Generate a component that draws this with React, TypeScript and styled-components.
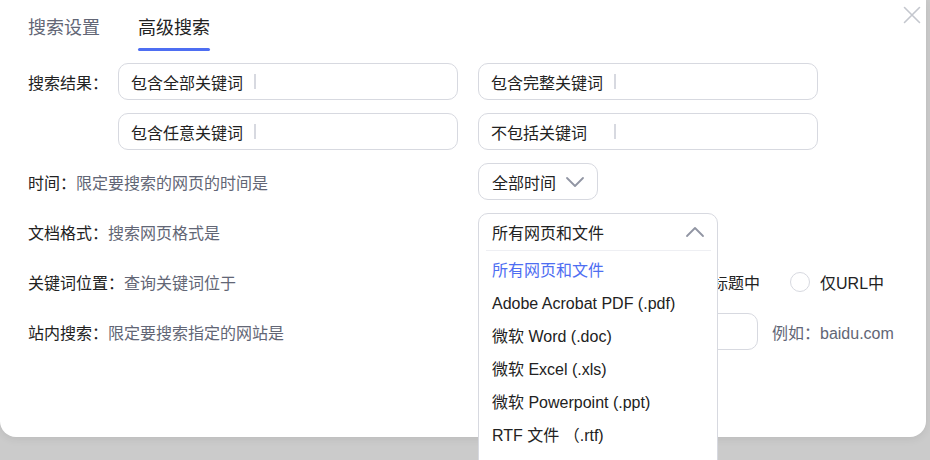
import React from 'react';
import styled, { createGlobalStyle } from 'styled-components';

const GlobalStyle = createGlobalStyle`
  html { overflow: hidden; height: 100%; background: #cbcbcb; }
  body {
    margin: 0;
    padding: 0;
    min-height: 100%;
    font-family: "Liberation Sans", Arial, "Noto Sans CJK SC", sans-serif;
    color: #222;
  }
  * { box-sizing: border-box; }
`;

const Modal = styled.div`
  position: relative;
  width: 926px;
  height: 437px;
  background: #fff;
  border-radius: 0 0 16px 16px;
  box-shadow: 0 2px 8px rgba(0, 0, 0, 0.08);
  padding-left: 28px;
`;

const CloseButton = styled.button`
  position: absolute;
  top: 5px;
  right: 4px;
  width: 20px;
  height: 20px;
  padding: 0;
  border: none;
  background: none;
  display: flex;
  align-items: center;
  justify-content: center;
`;

const Tabs = styled.div`
  display: flex;
  gap: 38px;
`;

const Tab = styled.div<{ $active?: boolean }>`
  display: flex;
  flex-direction: column;
  padding-top: 16px;
  font-size: 18px;
  line-height: 24px;
  color: ${(p) => (p.$active ? '#222' : '#626675')};
`;

const TabBar = styled.span<{ $active?: boolean }>`
  display: block;
  height: 3px;
  margin-top: 8px;
  border-radius: 2px;
  background: ${(p) => (p.$active ? '#4e6ef2' : 'transparent')};
`;

const Form = styled.div`
  display: flex;
  flex-direction: column;
  gap: 13px;
  margin-top: 12px;
  font-size: 16px;
`;

const KeywordRow = styled.div`
  display: flex;
`;

const RowLabel = styled.div`
  width: 90px;
  height: 37px;
  display: flex;
  align-items: center;
  white-space: nowrap;
`;

const InputGrid = styled.div`
  display: grid;
  grid-template-columns: 340px 340px;
  column-gap: 20px;
  row-gap: 13px;
`;

const Row = styled.div`
  display: grid;
  grid-template-columns: 450px auto;
  align-items: center;
  height: 37px;
`;

const Caption = styled.div`
  white-space: nowrap;
`;

const Desc = styled.span`
  color: #626675;
`;

const TextField = styled.div<{ $width?: number }>`
  width: ${(p) => p.$width ?? 340}px;
  height: 37px;
  border: 1px solid #d7d9e0;
  border-radius: 10px;
  display: flex;
  align-items: center;
  padding: 0 12px;
`;

const FieldLabel = styled.span`
  width: 112px;
  flex: none;
  white-space: nowrap;
`;

const Divider = styled.span`
  width: 2px;
  height: 15px;
  margin-left: 11px;
  background: #d7d9e0;
  flex: none;
`;

const Input = styled.input`
  flex: 1;
  min-width: 0;
  border: none;
  outline: none;
  background: transparent;
  font: inherit;
  padding: 0 8px;
`;

const Control = styled.div`
  position: relative;
  display: flex;
  align-items: center;
  height: 37px;
`;

const SelectBox = styled.div`
  width: 120px;
  height: 37px;
  border: 1px solid #d7d9e0;
  border-radius: 10px;
  display: flex;
  align-items: center;
  justify-content: space-between;
  padding: 0 12px 0 13px;
  white-space: nowrap;
`;

const Dropdown = styled.div`
  position: absolute;
  top: 0;
  left: 0;
  width: 240px;
  background: #fff;
  border: 1px solid #d7d9e0;
  border-radius: 10px;
  z-index: 10;
`;

const DropHeader = styled.div`
  height: 36px;
  display: flex;
  align-items: center;
  justify-content: space-between;
  padding: 0 12px 0 13px;
`;

const DropSep = styled.div`
  height: 1px;
  margin: 0 6px 0 7px;
  background: #eeeff3;
`;

const DropList = styled.ul`
  list-style: none;
  margin: 0;
  padding: 3px 0 30px;
`;

const DropItem = styled.li<{ $selected?: boolean }>`
  height: 33px;
  line-height: 33px;
  padding-left: 13px;
  white-space: nowrap;
  color: ${(p) => (p.$selected ? '#4e6ef2' : '#222')};
`;

const RadioGroup = styled.div`
  display: flex;
  gap: 30px;
`;

const RadioOption = styled.label`
  display: flex;
  align-items: center;
  gap: 10px;
  white-space: nowrap;
`;

const RadioCircle = styled.span`
  width: 20px;
  height: 20px;
  border-radius: 50%;
  border: 1.5px solid #d7d9e0;
  flex: none;
`;

const Hint = styled.span`
  margin-left: 14px;
  color: #626675;
  white-space: nowrap;
`;

const Chevron = ({ up }: { up?: boolean }) => (
  <svg width="20" height="12" viewBox="0 0 20 12" fill="none">
    <path
      d={up ? 'M2 10 L10 2 L18 10' : 'M2 2 L10 10 L18 2'}
      stroke="#9195a3"
      strokeWidth="1.8"
      strokeLinecap="round"
      strokeLinejoin="round"
    />
  </svg>
);

const fileTypes = [
  '所有网页和文件',
  'Adobe Acrobat PDF (.pdf)',
  '微软 Word (.doc)',
  '微软 Excel (.xls)',
  '微软 Powerpoint (.ppt)',
  'RTF 文件 （.rtf)',
];

export default function App() {
  return (
    <>
      <GlobalStyle />
      <Modal>
        <CloseButton aria-label="关闭">
          <svg width="18" height="18" viewBox="0 0 18 18">
            <path d="M1.5 1.5 L16.5 16.5 M16.5 1.5 L1.5 16.5" stroke="#c4c7ce" strokeWidth="1.6" strokeLinecap="round" />
          </svg>
        </CloseButton>
        <Tabs>
          <Tab>
            搜索设置
            <TabBar />
          </Tab>
          <Tab $active>
            高级搜索
            <TabBar $active />
          </Tab>
        </Tabs>
        <Form>
          <KeywordRow>
            <RowLabel>搜索结果：</RowLabel>
            <InputGrid>
              {['包含全部关键词', '包含完整关键词', '包含任意关键词', '不包括关键词'].map((t) => (
                <TextField key={t}>
                  <FieldLabel>{t}</FieldLabel>
                  <Divider />
                  <Input />
                </TextField>
              ))}
            </InputGrid>
          </KeywordRow>
          <Row>
            <Caption>
              时间：<Desc>限定要搜索的网页的时间是</Desc>
            </Caption>
            <Control>
              <SelectBox>
                全部时间
                <Chevron />
              </SelectBox>
            </Control>
          </Row>
          <Row>
            <Caption>
              文档格式：<Desc>搜索网页格式是</Desc>
            </Caption>
            <Control>
              <Dropdown>
                <DropHeader>
                  所有网页和文件
                  <Chevron up />
                </DropHeader>
                <DropSep />
                <DropList>
                  {fileTypes.map((f, i) => (
                    <DropItem key={f} $selected={i === 0}>
                      {f}
                    </DropItem>
                  ))}
                </DropList>
              </Dropdown>
            </Control>
          </Row>
          <Row>
            <Caption>
              关键词位置：<Desc>查询关键词位于</Desc>
            </Caption>
            <Control>
              <RadioGroup>
                <RadioOption>
                  <RadioCircle />
                  网页任何地方
                </RadioOption>
                <RadioOption>
                  <RadioCircle />
                  仅网页标题中
                </RadioOption>
                <RadioOption>
                  <RadioCircle />
                  仅URL中
                </RadioOption>
              </RadioGroup>
            </Control>
          </Row>
          <Row>
            <Caption>
              站内搜索：<Desc>限定要搜索指定的网站是</Desc>
            </Caption>
            <Control>
              <TextField $width={280}>
                <Input />
              </TextField>
              <Hint>例如：baidu.com</Hint>
            </Control>
          </Row>
        </Form>
      </Modal>
    </>
  );
}
